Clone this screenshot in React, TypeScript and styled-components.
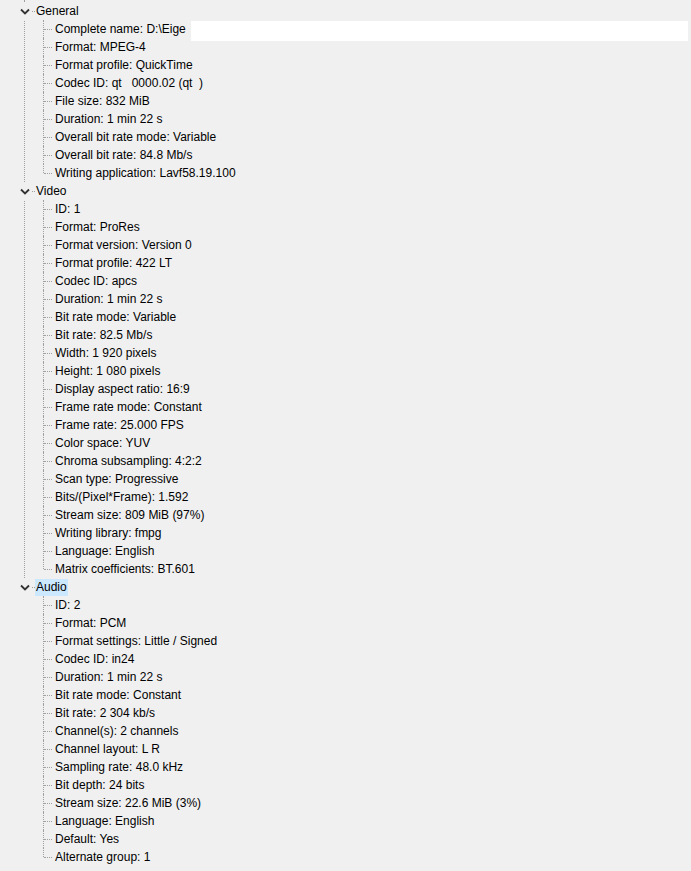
import React from "react";
import styled, { createGlobalStyle } from "styled-components";

const GlobalStyle = createGlobalStyle`
  html, body {
    margin: 0;
    padding: 0;
    background: #f0f0f0;
  }
  body {
    font-family: "Liberation Sans", Arial, sans-serif;
    font-size: 12px;
    color: #000;
  }
`;

const Page = styled.div`
  position: relative;
  width: 691px;
  height: 871px;
  padding-top: 2px;
  box-sizing: border-box;
  overflow: hidden;
  background: #f0f0f0;
`;

const Tree = styled.ul`
  list-style: none;
  margin: 0;
  padding: 0;
`;

const Section = styled.li<{ $first?: boolean; $last?: boolean }>`
  position: relative;

  /* root line */
  &::before {
    content: "";
    position: absolute;
    left: 24px;
    top: ${(p) => (p.$first ? "-2px" : "0")};
    height: ${(p) => (p.$last ? "9px" : p.$first ? "calc(100% + 2px)" : "100%")};
    border-left: 1px dotted #a0a0a0;
  }
`;

const Head = styled.div`
  position: relative;
  display: flex;
  align-items: center;
  height: 18px;
  padding-left: 17px;
`;

const Toggle = styled.span`
  position: relative;
  z-index: 1;
  display: flex;
  align-items: center;
  justify-content: center;
  width: 15px;
  height: 18px;
  background: #f0f0f0;
`;

const Connector = styled.span`
  width: 3px;
  height: 0;
  border-top: 1px dotted #a0a0a0;
`;

const Label = styled.span<{ $selected?: boolean }>`
  display: flex;
  align-items: center;
  height: 17px;
  padding: 0 1px;
  white-space: pre;
  background: ${(p) => (p.$selected ? "#cce8ff" : "transparent")};
`;

const Children = styled.ul`
  list-style: none;
  margin: 0;
  padding: 0;
`;

const Leaf = styled.li<{ $last?: boolean }>`
  position: relative;
  display: flex;
  align-items: center;
  height: 18px;
  padding-left: 54px;

  &::before {
    content: "";
    position: absolute;
    left: 43px;
    top: 0;
    height: ${(p) => (p.$last ? "9px" : "100%")};
    border-left: 1px dotted #a0a0a0;
  }

  &::after {
    content: "";
    position: absolute;
    left: 44px;
    top: 9px;
    width: 8px;
    border-top: 1px dotted #a0a0a0;
  }
`;

const Redaction = styled.div`
  position: absolute;
  left: 191px;
  top: 21px;
  width: 497px;
  height: 20px;
  background: #fff;
`;

const Chevron = () => (
  <svg width="10" height="7" viewBox="0 0 10 7">
    <polyline
      points="1,1.5 5,5.5 9,1.5"
      fill="none"
      stroke="#333"
      strokeWidth="1.8"
    />
  </svg>
);

type SectionData = { title: string; items: string[]; selected?: boolean };

const sections: SectionData[] = [
  {
    title: "General",
    items: [
      "Complete name: D:\\Eige",
      "Format: MPEG-4",
      "Format profile: QuickTime",
      "Codec ID: qt   0000.02 (qt  )",
      "File size: 832 MiB",
      "Duration: 1 min 22 s",
      "Overall bit rate mode: Variable",
      "Overall bit rate: 84.8 Mb/s",
      "Writing application: Lavf58.19.100",
    ],
  },
  {
    title: "Video",
    items: [
      "ID: 1",
      "Format: ProRes",
      "Format version: Version 0",
      "Format profile: 422 LT",
      "Codec ID: apcs",
      "Duration: 1 min 22 s",
      "Bit rate mode: Variable",
      "Bit rate: 82.5 Mb/s",
      "Width: 1 920 pixels",
      "Height: 1 080 pixels",
      "Display aspect ratio: 16:9",
      "Frame rate mode: Constant",
      "Frame rate: 25.000 FPS",
      "Color space: YUV",
      "Chroma subsampling: 4:2:2",
      "Scan type: Progressive",
      "Bits/(Pixel*Frame): 1.592",
      "Stream size: 809 MiB (97%)",
      "Writing library: fmpg",
      "Language: English",
      "Matrix coefficients: BT.601",
    ],
  },
  {
    title: "Audio",
    selected: true,
    items: [
      "ID: 2",
      "Format: PCM",
      "Format settings: Little / Signed",
      "Codec ID: in24",
      "Duration: 1 min 22 s",
      "Bit rate mode: Constant",
      "Bit rate: 2 304 kb/s",
      "Channel(s): 2 channels",
      "Channel layout: L R",
      "Sampling rate: 48.0 kHz",
      "Bit depth: 24 bits",
      "Stream size: 22.6 MiB (3%)",
      "Language: English",
      "Default: Yes",
      "Alternate group: 1",
    ],
  },
];

export default function App() {
  return (
    <Page>
      <GlobalStyle />
      <Tree>
        {sections.map((s, i) => (
          <Section key={s.title} $first={i === 0} $last={i === sections.length - 1}>
            <Head>
              <Toggle>
                <Chevron />
              </Toggle>
              <Connector />
              <Label $selected={s.selected}>{s.title}</Label>
            </Head>
            <Children>
              {s.items.map((item, j) => (
                <Leaf key={j} $last={j === s.items.length - 1}>
                  <Label>{item}</Label>
                </Leaf>
              ))}
            </Children>
          </Section>
        ))}
      </Tree>
      <Redaction />
    </Page>
  );
}
